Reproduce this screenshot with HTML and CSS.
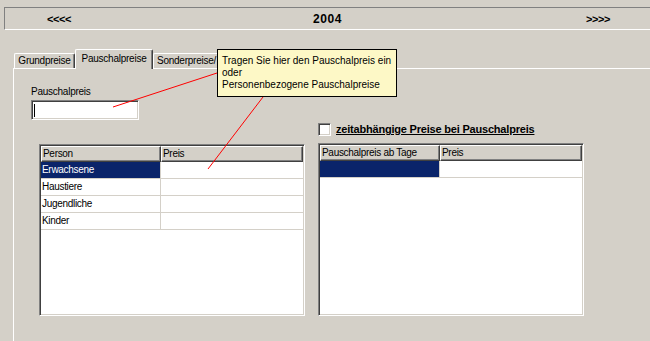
FILE: index.html
```html
<!DOCTYPE html>
<html>
<head>
<meta charset="utf-8">
<link rel="stylesheet" href="styles.css">
</head>
<body>
<div class="screen">
  <div class="navbar">
    <span class="nav-prev">&lt;&lt;&lt;&lt;</span>
    <span class="nav-year">2004</span>
    <span class="nav-next">&gt;&gt;&gt;&gt;</span>
  </div>
  <div class="tabs">
    <div class="tab tab-grund">Grundpreise</div>
    <div class="tab tab-active">Pauschalpreise</div>
    <div class="tab tab-sonder">Sonderpreise/</div>
  </div>
  <div class="panel">
    <div class="field">
      <div class="field-label">Pauschalpreis</div>
      <div class="input"><span class="caret"></span></div>
    </div>
    <div class="grids">
      <div class="col col-left">
        <div class="grid grid-left">
          <div class="grid-head">
            <div class="head-cell">Person</div>
            <div class="head-cell">Preis</div>
          </div>
          <div class="grid-row">
            <div class="cell cell-first selected">Erwachsene</div>
            <div class="cell"></div>
          </div>
          <div class="grid-row">
            <div class="cell cell-first">Haustiere</div>
            <div class="cell"></div>
          </div>
          <div class="grid-row">
            <div class="cell cell-first">Jugendliche</div>
            <div class="cell"></div>
          </div>
          <div class="grid-row">
            <div class="cell cell-first">Kinder</div>
            <div class="cell"></div>
          </div>
        </div>
      </div>
      <div class="col col-right">
        <div class="check-row">
          <span class="checkbox"></span>
          <span class="check-label">zeitabhängige Preise bei Pauschalpreis</span>
        </div>
        <div class="grid grid-right">
          <div class="grid-head">
            <div class="head-cell">Pauschalpreis ab Tage</div>
            <div class="head-cell">Preis</div>
          </div>
          <div class="grid-row">
            <div class="cell cell-first selected"></div>
            <div class="cell"></div>
          </div>
        </div>
      </div>
    </div>
  </div>
  <div class="tooltip">
    <div>Tragen Sie hier den Pauschalpreis ein</div>
    <div>oder</div>
    <div>Personenbezogene Pauschalpreise</div>
  </div>
  <svg class="pointers" width="650" height="341" viewBox="0 0 650 341">
    <line x1="113" y1="107" x2="217" y2="73" stroke="#ff0000" stroke-width="1"/>
    <line x1="263" y1="97" x2="208" y2="169" stroke="#ff0000" stroke-width="1"/>
  </svg>
</div>
</body>
</html>
```
FILE: styles.css
```css
* { box-sizing: border-box; }
html, body { margin: 0; padding: 0; }
body {
  width: 650px;
  height: 341px;
  overflow: hidden;
  background: #d4d0c8;
  font-family: "Liberation Sans", Arial, sans-serif;
  font-size: 10px;
  color: #000;
}
.screen {
  position: relative;
  width: 650px;
  height: 341px;
  display: flex;
  flex-direction: column;
}
.navbar {
  margin: 7px 0 0 4px;
  height: 23px;
  border-top: 1px solid #808080;
  border-left: 1px solid #808080;
  border-bottom: 1px solid #fff;
  display: grid;
  grid-template-columns: 1fr auto 1fr;
  align-items: center;
  padding-top: 1px;
  flex: none;
}
.nav-prev, .nav-next {
  font-weight: bold;
  font-size: 11px;
  letter-spacing: -0.4px;
}
.nav-prev { padding-left: 42px; }
.nav-next { justify-self: end; padding-right: 40px; }
.nav-year { font-weight: bold; font-size: 12px; letter-spacing: 0.6px; }

.tabs {
  position: relative;
  z-index: 2;
  display: flex;
  align-items: flex-end;
  margin: 19px 0 0 14px;
  height: 19px;
  flex: none;
}
.tab {
  background: #d4d0c8;
  border-top: 1px solid #fff;
  border-left: 1px solid #fff;
  border-right: 1px solid #404040;
  box-shadow: inset -1px 0 #808080;
  border-radius: 2px 2px 0 0;
  height: 15px;
  line-height: 14px;
  text-align: center;
  white-space: nowrap;
  overflow: hidden;
  letter-spacing: -0.25px;
}
.tab-grund { width: 61px; }
.tab-active { width: 78px; height: 20px; margin-bottom: -1px; line-height: 18px; }
.tab-sonder { width: 76px; text-align: left; padding-left: 3px; }

.panel {
  flex: 1;
  margin-left: 13px;
  border-top: 1px solid #fff;
  border-left: 1px solid #fff;
  padding: 17px 0 0 17px;
}
.field-label {
  line-height: 12px;
  height: 12px;
  letter-spacing: -0.25px;
}
.input {
  margin-top: 2px;
  width: 108px;
  height: 20px;
  background: #fff;
  border: 1px solid;
  border-color: #808080 #fff #fff #808080;
  box-shadow: inset 1px 1px #404040, inset -1px -1px #d4d0c8;
  padding: 3px 0 0 2px;
}
.caret {
  display: block;
  width: 1px;
  height: 13px;
  background: #000;
}
.grids {
  display: flex;
  gap: 13px;
  margin-left: 8px;
}
.col-left { padding-top: 24px; }
.check-row {
  margin-top: 3px;
  height: 13px;
  display: flex;
  align-items: center;
}
.checkbox {
  width: 13px;
  height: 13px;
  background: #fff;
  border: 1px solid;
  border-color: #808080 #fff #fff #808080;
  box-shadow: inset 1px 1px #404040, inset -1px -1px #d4d0c8;
  flex: none;
}
.check-label {
  margin-left: 5px;
  font-weight: bold;
  font-size: 11px;
  letter-spacing: -0.2px;
  text-decoration: underline;
  line-height: 13px;
}
.grid {
  width: 266px;
  background: #fff;
  border: 1px solid;
  border-color: #808080 #fff #fff #808080;
  box-shadow: inset 1px 1px #404040, inset -1px -1px #d4d0c8;
  padding: 1px;
}
.grid-left { height: 172px; }
.grid-right { height: 173px; margin-top: 7px; }
.grid-head {
  display: grid;
  grid-template-columns: 120px 1fr;
  height: 16px;
}
.head-cell {
  background: #d4d0c8;
  border-top: 1px solid #fff;
  border-left: 1px solid #fff;
  border-right: 1px solid #404040;
  border-bottom: 1px solid #404040;
  box-shadow: inset -1px -1px #808080;
  padding-left: 1px;
  line-height: 13px;
  white-space: nowrap;
  overflow: hidden;
  letter-spacing: -0.3px;
}
.grid-row {
  display: grid;
  grid-template-columns: 120px 1fr;
  height: 17px;
  border-bottom: 1px solid #d4d0c8;
}
.cell {
  line-height: 16px;
  padding-left: 1px;
  white-space: nowrap;
  letter-spacing: -0.3px;
}
.cell-first { border-right: 1px solid #d4d0c8; }
.selected { background: #0a246a; color: #fff; }

.tooltip {
  position: absolute;
  left: 217px;
  top: 49px;
  width: 180px;
  height: 48px;
  background: #fdf8c6;
  border: 1px solid #000;
  padding: 5px 0 0 4px;
  line-height: 12px;
  z-index: 3;
  white-space: nowrap;
}
.pointers {
  position: absolute;
  left: 0;
  top: 0;
  z-index: 4;
  pointer-events: none;
}
```
